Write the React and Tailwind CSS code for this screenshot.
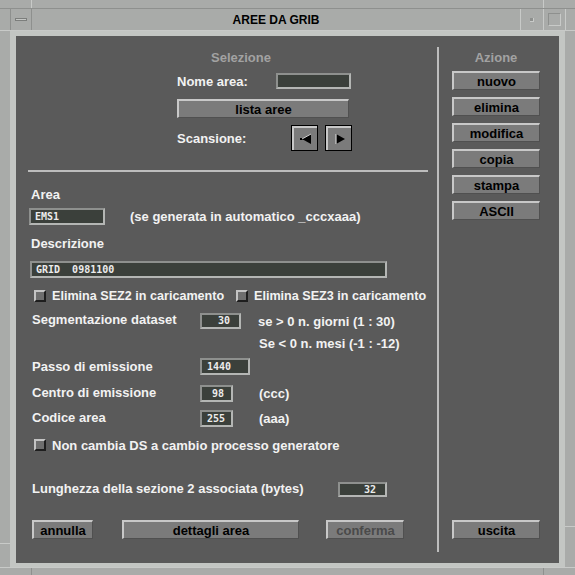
import React from 'react';

const Btn = ({ w, className = '', children, disabled }) => (
  <div
    className={`${w} h-[19px] flex items-center justify-center bg-[#7b7b7b] border-t-2 border-l-2 border-b border-r border-t-[#c8c8c8] border-l-[#c8c8c8] border-b-[#505050] border-r-[#505050] text-[13px] font-bold leading-none ${disabled ? 'text-[#4a4a4a]' : 'text-black'} ${className}`}
  >
    {children}
  </div>
);

const Field = ({ w, h = 'h-[17px]', pl = 'pl-[5px]', className = '', children }) => (
  <div
    className={`${w} ${h} ${pl} ${className} shrink-0 flex items-center bg-[#3b403b] border-2 border-t-[#8e908e] border-l-[#8e908e] border-b-[#b4b6b4] border-r-[#b4b6b4] text-[10px] font-bold text-[#ececec] font-['DejaVu_Sans_Mono',monospace] whitespace-pre leading-none`}
  >
    {children}
  </div>
);

const Check = () => (
  <div className="w-[12px] h-[12px] shrink-0 bg-[#6e6e6e] border-t-2 border-l-2 border-b-2 border-r-2 border-t-[#c4c4c4] border-l-[#c4c4c4] border-b-[#1e1e1e] border-r-[#1e1e1e]" />
);

const Arrow = ({ dir }) => (
  <div className="w-[27px] h-[26px] border border-black bg-[#7b7b7b]">
    <div className="w-full h-full border-t-2 border-l-2 border-[#c8c8c8] flex items-center justify-center">
      <svg width="14" height="12" viewBox="0 0 14 12">
        {dir === 'left' ? (
          <>
            <rect x="1" y="5" width="4" height="2" fill="#000" />
            <polygon points="12,1 12,11 3,6" fill="#000" />
            <line x1="3" y1="6" x2="12" y2="1" stroke="#d0d0d0" strokeWidth="1" />
          </>
        ) : (
          <>
            <polygon points="3,1 3,11 12,6" fill="#000" />
            <line x1="3" y1="1" x2="3" y2="11" stroke="#d0d0d0" strokeWidth="1.2" />
          </>
        )}
      </svg>
    </div>
  </div>
);

export default function App() {
  return (
    <div className="w-[575px] h-[575px] bg-[#a9aba9] flex flex-col font-['Liberation_Sans',Arial,sans-serif] overflow-hidden">
      {/* top edge */}
      <div className="h-[9px] flex border-b border-[#8e908e]">
        <div className="w-[32px] border-r border-[#c8cac8]" />
        <div className="flex-1" />
        <div className="w-[32px] border-l border-[#c8cac8]" />
      </div>

      {/* title bar */}
      <div className="h-[22px] flex border-b border-[#c8cac8]">
        <div className="w-[10px]" />
        <div className="w-[22px] border-l border-r border-[#8e908e] flex items-center justify-center">
          <div className="w-[12px] h-[3px] bg-[#c4c6c4] border border-[#7c7e7c]" />
        </div>
        <div className="flex-1 flex items-center justify-center text-[12px] font-bold text-black">
          AREE DA GRIB
        </div>
        <div className="w-[23px] border-l border-[#c8cac8] flex items-center justify-center">
          <div className="w-[4px] h-[4px] bg-[#8e908e] border-b border-r border-[#c8cac8]" />
        </div>
        <div className="w-[22px] border-l border-[#c8cac8] flex items-center justify-center">
          <div className="w-[13px] h-[13px] border border-t-[#8e908e] border-l-[#8e908e] border-b-[#c8cac8] border-r-[#c8cac8]" />
        </div>
        <div className="w-[10px] border-l border-[#c8cac8]" />
      </div>

      {/* body */}
      <div className="flex-1 flex">
        <div className="w-[10px] flex flex-col">
          <div className="flex-1" />
          <div className="h-[24px] border-t border-[#c8cac8]" />
        </div>

        <div className="flex-1 border-l-[6px] border-t-[5px] border-r-[6px] border-b-[4px] border-[#c3c6c3] bg-[#5a5a5a] flex">
          {/* left panel */}
          <div className="w-[421px] flex flex-col text-[13px] font-bold text-[#f2f2f2] leading-none whitespace-nowrap">
            <div className="mt-[13px] ml-[160px] w-[130px] h-[16px] flex items-center justify-center text-[#a2a2a2]">
              Selezione
            </div>
            <div className="mt-[8px] ml-[161px] h-[16px] flex items-center">
              <span className="w-[99px]">Nome area:</span>
              <Field w="w-[75px]" h="h-[16px]" />
            </div>
            <Btn w="w-[172px]" className="mt-[10px] ml-[161px]">lista aree</Btn>
            <div className="mt-[7px] ml-[161px] h-[26px] flex items-center">
              <span className="w-[114px]">Scansione:</span>
              <Arrow dir="left" />
              <div className="w-[7px]" />
              <Arrow dir="right" />
            </div>

            <div className="mt-[19px] ml-[12px] w-[400px] h-[2px] bg-[#bdbdbd]" />

            <div className="mt-[14px] ml-[15px] h-[16px] flex items-center">Area</div>
            <div className="mt-[6px] ml-[13px] h-[17px] flex items-center">
              <Field w="w-[76px]" pl="pl-[4px]">EMS1</Field>
              <span className="ml-[25px]">(se generata in automatico _cccxaaa)</span>
            </div>

            <div className="mt-[10px] ml-[15px] h-[16px] flex items-center">Descrizione</div>
            <div className="mt-[10px] ml-[14px] h-[17px] flex items-center">
              <Field w="w-[357px]" pl="pl-[4px]">GRID  0981100</Field>
            </div>

            <div className="mt-[10px] ml-[18px] h-[16px] flex items-center text-[12.6px]">
              <Check />
              <span className="ml-[6px] w-[184px]">Elimina SEZ2 in caricamento</span>
              <Check />
              <span className="ml-[6px]">Elimina SEZ3 in caricamento</span>
            </div>

            <div className="mt-[9px] ml-[16px] h-[16px] flex items-center">
              <span className="w-[168px] -mt-[3px]">Segmentazione dataset</span>
              <Field w="w-[41px]" h="h-[16px]" pl="pl-[16px]">30</Field>
              <span className="ml-[17px]">se &gt; 0 n. giorni (1 : 30)</span>
            </div>
            <div className="mt-[6px] ml-[243px] h-[16px] flex items-center">Se &lt; 0 n. mesi (-1 : -12)</div>

            <div className="mt-[7px] ml-[16px] h-[17px] flex items-center">
              <span className="w-[168px]">Passo di emissione</span>
              <Field w="w-[50px]" pl="pl-[5px]">1440</Field>
            </div>
            <div className="mt-[10px] ml-[16px] h-[17px] flex items-center">
              <span className="w-[168px] -mt-[3px]">Centro di emissione</span>
              <Field w="w-[33px]" pl="pl-[10px]">98</Field>
              <span className="ml-[26px]">(ccc)</span>
            </div>
            <div className="mt-[8px] ml-[16px] h-[17px] flex items-center">
              <span className="w-[168px] -mt-[3px]">Codice area</span>
              <Field w="w-[33px]" pl="pl-[5px]">255</Field>
              <span className="ml-[26px]">(aaa)</span>
            </div>

            <div className="mt-[10px] ml-[18px] h-[16px] flex items-center">
              <Check />
              <span className="ml-[6px]">Non cambia DS a cambio processo generatore</span>
            </div>

            <div className="mt-[29px] ml-[16px] h-[15px] flex items-center">
              <span className="w-[306px] -mt-[3px]">Lunghezza della sezione 2 associata (bytes)</span>
              <Field w="w-[49px]" h="h-[15px]" pl="pl-[24px]">32</Field>
            </div>

            <div className="mt-[23px] ml-[16px] flex items-center">
              <Btn w="w-[61px]">annulla</Btn>
              <Btn w="w-[177px]" className="ml-[29px]">dettagli area</Btn>
              <Btn w="w-[78px]" className="ml-[27px]" disabled>conferma</Btn>
            </div>
          </div>

          {/* separator */}
          <div className="w-[2px] my-[11px] bg-[#bdbdbd]" />

          {/* right panel */}
          <div className="flex-1 flex flex-col text-[13px] font-bold leading-none">
            <div className="mt-[13px] ml-[13px] w-[88px] h-[16px] flex items-center justify-center text-[#a2a2a2]">
              Azione
            </div>
            <Btn w="w-[88px]" className="mt-[6px] ml-[13px]">nuovo</Btn>
            <Btn w="w-[88px]" className="mt-[7px] ml-[13px]">elimina</Btn>
            <Btn w="w-[88px]" className="mt-[7px] ml-[13px]">modifica</Btn>
            <Btn w="w-[88px]" className="mt-[7px] ml-[13px]">copia</Btn>
            <Btn w="w-[88px]" className="mt-[7px] ml-[13px]">stampa</Btn>
            <Btn w="w-[88px]" className="mt-[7px] ml-[13px]">ASCII</Btn>
            <Btn w="w-[88px]" className="mt-auto mb-[24px] ml-[13px]">uscita</Btn>
          </div>
        </div>

        <div className="w-[10px] flex flex-col">
          <div className="h-[496px] border-b border-[#c8cac8]" />
          <div className="flex-1" />
        </div>
      </div>

      {/* bottom edge */}
      <div className="h-[8px] flex border-t border-[#c8cac8]">
        <div className="w-[32px] border-r border-[#8e908e]" />
        <div className="flex-1" />
        <div className="w-[32px] border-l border-[#8e908e]" />
      </div>
    </div>
  );
}
